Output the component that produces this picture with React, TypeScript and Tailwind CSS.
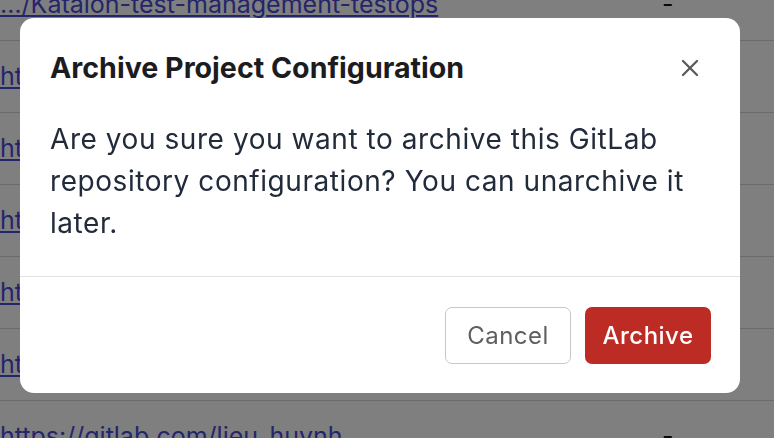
import { X } from "lucide-react";

const rows = [
  { url: "…/Katalon-test-management-testops", value: "-" },
  { url: "https://gitlab.com/katalon/katalon-studio-samples", value: "-" },
  { url: "https://gitlab.com/katalon/testops-demo-project", value: "-" },
  { url: "https://gitlab.com/katalon/katalon-ci-samples", value: "-" },
  { url: "https://gitlab.com/katalon/web-ui-tests", value: "-" },
  { url: "https://gitlab.com/katalon/api-tests", value: "-" },
  { url: "https://gitlab.com/lieu_huynh", value: "-" },
];

export default function App() {
  return (
    <div className="relative h-[438px] w-[774px] overflow-hidden bg-white font-['Inter',sans-serif]">
      <div className="-mt-[31px] flex flex-col">
        {rows.map((row, i) => (
          <div
            key={i}
            className="flex h-[72px] shrink-0 items-center border-b border-[#d6d6d6] text-[25px]"
          >
            <span className="w-[640px] whitespace-nowrap text-[#4a4ad8] underline">{row.url}</span>
            <span className="pl-[22px] text-[#111]">{row.value}</span>
          </div>
        ))}
      </div>

      <div className="fixed inset-0 bg-black/50 pl-[20px] pt-[18px]">
        <div className="flex h-[375px] w-[720px] flex-col rounded-[14px] bg-white">
          <div className="flex items-center justify-between pl-[30px] pr-[36px] pt-[32px]">
            <h2 className="text-[28.6px] font-bold leading-[36px] text-[#1c1c1e]">
              Archive Project Configuration
            </h2>
            <X className="h-[28px] w-[28px] text-[#5c5c5c]" strokeWidth={2} />
          </div>
          <p className="px-[30px] pt-[32px] text-[28px] leading-[42px] tracking-[0.02em] text-[#222b3a]">
            Are you sure you want to archive this GitLab repository configuration? You can unarchive it
            later.
          </p>
          <div className="mt-auto flex justify-end gap-[14px] border-t border-[#e2e2e2] px-[29px] pb-[29px] pt-[30px]">
            <button className="h-[57px] w-[126px] rounded-[7px] border border-[#c6c6c6] text-[24px] tracking-[0.02em] text-[#5f5f5f]">
              Cancel
            </button>
            <button className="h-[57px] w-[126px] rounded-[7px] bg-[#bd2c24] text-[24px] font-medium tracking-[0.02em] text-white">
              Archive
            </button>
          </div>
        </div>
      </div>
    </div>
  );
}
